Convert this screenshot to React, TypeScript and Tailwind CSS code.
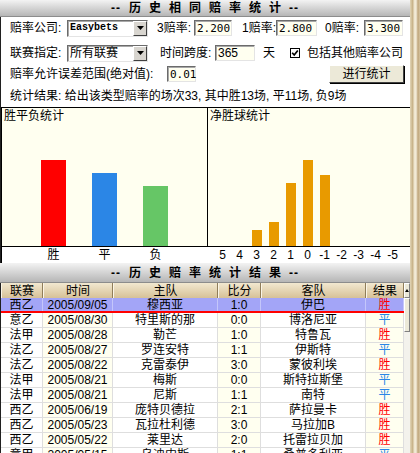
const FONT = "font-['Liberation_Sans','Noto_Sans_CJK_SC',sans-serif]";

const sunken =
  "border border-t-[#6b6b6b] border-l-[#6b6b6b] border-r-[#e4e4e4] border-b-[#e4e4e4] shadow-[inset_1px_1px_0_#a8a8a8]";

function TitleBar({ chars, h }: { chars: string[]; h: string }) {
  return (
    <div
      className={`${h} shrink-0 flex items-center justify-center gap-[8px] bg-linear-to-b from-[#f3f3f3] to-[#b6b6b6] border-b border-[#8c8c8c] text-[12px] font-bold leading-none text-black`}
    >
      <span className="tracking-[1px]">--</span>
      {chars.map((c, i) => (
        <span key={i}>{c}</span>
      ))}
      <span className="tracking-[1px]">--</span>
    </div>
  );
}

function Field({ value, w, mono }: { value: string; w: string; mono?: boolean }) {
  return (
    <div
      className={`${w} h-[16px] flex items-center pl-[2px] bg-[#fffff0] ${sunken} leading-none ${
        mono ? "font-['DejaVu_Sans_Mono',monospace] text-[11px]" : "text-[12px]"
      }`}
    >
      {value}
    </div>
  );
}

function Select({ value, mono }: { value: string; mono?: boolean }) {
  return (
    <div className={`w-[81px] h-[17px] flex bg-white ${sunken}`}>
      <div
        className={`flex-1 flex items-center pl-[2px] leading-none ${
          mono ? "font-['Liberation_Mono',monospace] text-[10px] font-bold" : "text-[12px]"
        }`}
      >
        {value}
      </div>
      <div className="w-[14px] flex items-center justify-center bg-[#d8d5cf] border border-t-white border-l-white border-r-[#404040] border-b-[#404040]">
        <svg width="7" height="4" viewBox="0 0 7 4">
          <path d="M0 0h7L3.5 4z" fill="#000" />
        </svg>
      </div>
    </div>
  );
}

const wdl = [
  { label: "胜", h: 86, color: "bg-[#ff0000]" },
  { label: "平", h: 73, color: "bg-[#2b86e6]" },
  { label: "负", h: 60, color: "bg-[#66c666]" },
];

const goals = [
  { label: "5", h: 0 },
  { label: "4", h: 0 },
  { label: "3", h: 16 },
  { label: "2", h: 24 },
  { label: "1", h: 63 },
  { label: "0", h: 86 },
  { label: "-1", h: 71 },
  { label: "-2", h: 0 },
  { label: "-3", h: 0 },
  { label: "-4", h: 0 },
  { label: "-5", h: 0 },
];

const rows = [
  ["西乙", "2005/09/05", "穆西亚", "1:0", "伊巴", "胜"],
  ["意乙", "2005/08/30", "特里斯的那", "0:0", "博洛尼亚", "平"],
  ["法甲", "2005/08/28", "勒芒", "1:0", "特鲁瓦", "胜"],
  ["法乙", "2005/08/27", "罗连安特", "1:1", "伊斯特", "平"],
  ["法乙", "2005/08/22", "克雷泰伊", "3:0", "蒙彼利埃", "胜"],
  ["法甲", "2005/08/21", "梅斯", "0:0", "斯特拉斯堡", "平"],
  ["法甲", "2005/08/21", "尼斯", "1:1", "南特", "平"],
  ["西乙", "2005/06/19", "庞特贝德拉", "2:1", "萨拉曼卡", "胜"],
  ["西乙", "2005/05/23", "瓦拉杜利德", "3:0", "马拉加B", "胜"],
  ["西乙", "2005/05/22", "莱里达", "2:0", "托雷拉贝加", "胜"],
  ["意甲", "2005/05/15", "乌迪内斯", "1:1", "桑普多利亚", "平"],
];

const headers = ["联赛", "时间", "主队", "比分", "客队", "结果"];
const cols = "grid grid-cols-[42px_70px_105px_43px_105px_38px]";
const colBg = ["bg-white", "bg-[#fffff0]", "bg-white", "bg-[#fffff0]", "bg-white", "bg-[#fffff0]"];

export default function App() {
  return (
    <div className={`w-[420px] h-[453px] flex items-start overflow-hidden bg-white text-black ${FONT}`}>
      <div className="w-[410px] shrink-0 flex flex-col">
        <TitleBar h="h-[17px]" chars={["历", "史", "相", "同", "赔", "率", "统", "计"]} />

        <div className="flex flex-col border-l border-[#202020] text-[12px] leading-none">
          {/* form */}
          <div className="mt-[2px] h-[18px] flex items-center pl-[9px]">
            <span className="w-[57px]">赔率公司:</span>
            <Select value="Easybets" mono />
            <span className="ml-[9px] w-[37px]">3赔率:</span>
            <Field value="2.200" w="w-[38px]" mono />
            <span className="ml-[10px] w-[34px]">1赔率:</span>
            <Field value="2.800" w="w-[41px]" mono />
            <span className="ml-[8px] w-[39px]">0赔率:</span>
            <Field value="3.300" w="w-[39px]" mono />
          </div>

          <div className="mt-[7px] h-[18px] flex items-center pl-[9px]">
            <span className="w-[57px]">联赛指定:</span>
            <Select value="所有联赛" />
            <span className="ml-[12px] w-[55px]">时间跨度:</span>
            <Field value="365" w="w-[40px]" />
            <span className="ml-[8px]">天</span>
            <svg className="ml-[15px]" width="10" height="10" viewBox="0 0 10 10">
              <rect x="0.5" y="0.5" width="9" height="9" fill="#fff" stroke="#000" />
              <path d="M2.2 4.8l2 2.2 3.6-4.6" stroke="#000" strokeWidth="1.7" fill="none" />
            </svg>
            <span className="ml-[7px]">包括其他赔率公司</span>
          </div>

          <div className="mt-[2px] h-[20px] flex items-center pl-[9px] pr-[6px]">
            <span className="w-[157px]">赔率允许误差范围(绝对值):</span>
            <Field value="0.01" w="w-[29px]" mono />
            <button
              type="button"
              className="ml-auto w-[75px] h-[18px] flex items-center justify-center bg-[#ece9d8] border border-t-white border-l-white border-r-[#404040] border-b-[#404040] shadow-[1px_1px_0_#000] text-[12px]"
            >
              进行统计
            </button>
          </div>

          <div className="mt-[2px] h-[19px] flex items-center pl-[9px]">
            统计结果: 给出该类型赔率的场次33, 其中胜13场, 平11场, 负9场
          </div>

          {/* charts */}
          <div className="mt-[2px] flex">
            <div className="w-[206px] flex flex-col">
              <div className="relative h-[140px] bg-[#fffff0] border-t border-l border-b border-black flex items-end pl-[39px] gap-[26px]">
                <span className="absolute left-[2px] top-[2px]">胜平负统计</span>
                {wdl.map((b) => (
                  <div key={b.label} className={`w-[25px] ${b.color}`} style={{ height: b.h }} />
                ))}
              </div>
              <div className="h-[16px] flex items-center border-l border-black pl-[39px] gap-[26px]">
                {wdl.map((b) => (
                  <span key={b.label} className="w-[25px] text-center">
                    {b.label}
                  </span>
                ))}
              </div>
            </div>
            <div className="flex-1 flex flex-col">
              <div className="relative h-[140px] bg-[#fffff0] border-t border-l border-b border-black flex items-end pl-[6px]">
                <span className="absolute left-[2px] top-[2px]">净胜球统计</span>
                {goals.map((g) => (
                  <div key={g.label} className="w-[17px] flex justify-center">
                    <div className="w-[10px] bg-[#e89a00]" style={{ height: g.h }} />
                  </div>
                ))}
              </div>
              <div className="h-[16px] flex items-center pl-[7px]">
                {goals.map((g) => (
                  <span key={g.label} className="w-[17px] text-center">
                    {g.label}
                  </span>
                ))}
              </div>
            </div>
          </div>
        </div>

        <TitleBar h="h-[20px]" chars={["历", "史", "赔", "率", "统", "计", "结", "果"]} />

        {/* table */}
        <div className="flex border-l border-[#202020] text-[12px] leading-none">
          <div className="w-[403px] flex flex-col">
            <div className={`${cols} h-[15px]`}>
              {headers.map((h) => (
                <div
                  key={h}
                  className="flex items-center justify-center bg-linear-to-b from-[#f2e8d0] to-[#d6c197] border-r border-r-[#8f7d5a] border-l border-l-[#fbf5e6]"
                >
                  {h}
                </div>
              ))}
            </div>
            {rows.map((r, i) => (
              <div
                key={i}
                className={`${cols} h-[15px] ${i === 0 ? "border-b-2 border-[#ff0000]" : ""}`}
              >
                {r.map((c, j) => (
                  <div
                    key={j}
                    className={`flex items-center justify-center border-r ${
                      i === 0 ? "bg-[#a3a5f7] border-[#c4c6fa]" : `${colBg[j]} border-r-[#dedede] border-b border-b-[#dedede]`
                    } ${j === 5 ? (c === "胜" ? "text-[#ff0000]" : "text-[#2b86e6]") : ""}`}
                  >
                    {c}
                  </div>
                ))}
              </div>
            ))}
          </div>
          <div className="w-[6px] flex flex-col bg-[#f3f2ec]">
            <div className="h-[15px] flex items-center justify-center bg-[#ece9d8] border border-t-white border-l-white border-r-[#808080] border-b-[#808080]">
              <svg width="4" height="3" viewBox="0 0 4 3">
                <path d="M0 3h4L2 0z" fill="#000" />
              </svg>
            </div>
            <div className="h-[34px] bg-[#ece9d8] border border-t-white border-l-white border-r-[#808080] border-b-[#808080]" />
          </div>
        </div>
      </div>
      <div className="w-[10px] h-[453px] shrink-0 bg-[linear-gradient(to_right,#e2d6b8_0%,#c9b48a_25%,#efe6cf_45%,#f3ecd9_60%,#bfa57a_80%,#d6c4a0_100%)]" />
    </div>
  );
}
